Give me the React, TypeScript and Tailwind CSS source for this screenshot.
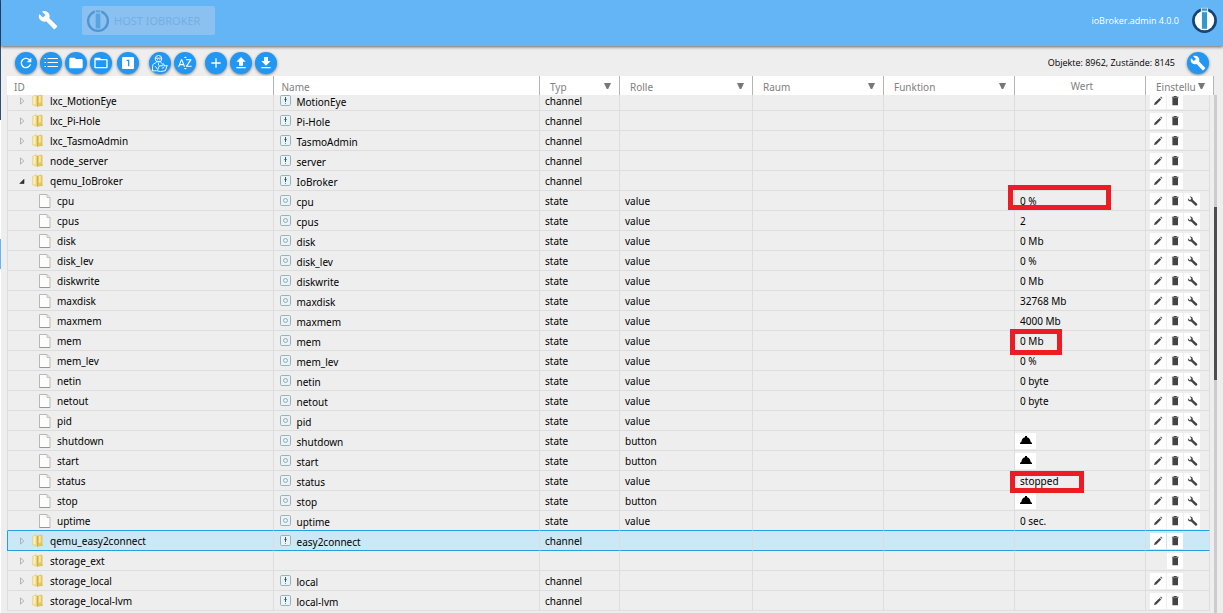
import type { ReactNode } from "react";
import {
  MdAdd, MdBuild, MdFileDownload, MdFileUpload, MdFolder, MdFolderOpen,
  MdLooksOne, MdRefresh, MdSortByAlpha,
} from "react-icons/md";

type Kind = "folder" | "open" | "file";
type Row = {
  kind: Kind;
  id: string;
  name?: string;
  type?: string;
  role?: string;
  value?: string;
  mark?: string;
  selected?: boolean;
};

const channel = (id: string, name: string, extra: Partial<Row> = {}): Row => ({ kind: "folder", id, name, type: "channel", ...extra });
const state = (id: string, value: string, mark?: string): Row => ({ kind: "file", id, name: id, type: "state", role: "value", value, mark });
const action = (id: string): Row => ({ kind: "file", id, name: id, type: "state", role: "button" });

const rows: Row[] = [
  channel("lxc_MotionEye", "MotionEye"),
  channel("lxc_Pi-Hole", "Pi-Hole"),
  channel("lxc_TasmoAdmin", "TasmoAdmin"),
  channel("node_server", "server"),
  channel("qemu_IoBroker", "IoBroker", { kind: "open" }),
  state("cpu", "0 %", "-left-[7px] -top-[6px] h-[25px] w-[103px]"),
  state("cpus", "2"),
  state("disk", "0 Mb"),
  state("disk_lev", "0 %"),
  state("diskwrite", "0 Mb"),
  state("maxdisk", "32768 Mb"),
  state("maxmem", "4000 Mb"),
  state("mem", "0 Mb", "-left-[5px] -top-[2px] h-[26px] w-[52px]"),
  state("mem_lev", "0 %"),
  state("netin", "0 byte"),
  state("netout", "0 byte"),
  state("pid", ""),
  action("shutdown"),
  action("start"),
  state("status", "stopped", "-left-[5px] top-0 h-[22px] w-[74px]"),
  action("stop"),
  state("uptime", "0 sec."),
  channel("qemu_easy2connect", "easy2connect", { selected: true }),
  { kind: "folder", id: "storage_ext" },
  channel("storage_local", "local"),
  channel("storage_local-lvm", "local-lvm"),
];

function Logo({ ring, bar, fill, gap, className }: { ring: string; bar: string; fill: string; gap: string; className: string }) {
  return (
    <svg viewBox="0 0 26 26" className={className} aria-hidden="true">
      <circle cx="13" cy="13" r="10.7" fill={fill} stroke={ring} strokeWidth="2.6" />
      <rect x="9.5" y=".8" width="7" height="4" fill={gap} />
      <rect x="10.5" y="1.4" width="5" height="2.2" fill={bar} />
      <rect x="10.5" y="5" width="5" height="16" fill={bar} />
    </svg>
  );
}

function Round({ label, className = "", children }: { label: string; className?: string; children: ReactNode }) {
  return (
    <button
      type="button"
      aria-label={label}
      className={`flex size-[22px] shrink-0 items-center justify-center rounded-full bg-[#2196f3] text-white shadow-[0_1px_3px_rgba(0,0,0,0.45)] ${className}`}
    >
      {children}
    </button>
  );
}

function ListIcon() {
  return (
    <svg viewBox="0 0 14 11" className="mb-px h-[11px] w-[14px]" stroke="white" aria-hidden="true">
      <path d="M3.5 1.5H14M3.5 5.5H14M3.5 9.5H14M.5 1.5H2M.5 5.5H2M.5 9.5H2" />
    </svg>
  );
}

function Expert() {
  return (
    <svg viewBox="0 0 18 18" className="size-[18px]" fill="none" stroke="white" strokeWidth=".9" aria-hidden="true">
      <circle cx="7.5" cy="4.8" r="3.3" />
      <path d="M4 4.2h7M6 5.4h.8M8.5 5.4h.8M6.3 7c.8.5 1.6.5 2.4 0M5.5 8.5l-2.8 1.3C1.6 10.5 1.4 13 1.5 16.8h4.2M9.5 8.5l2 1M4.2 12.2l2 2.7M6.2 16.8l2.2-5h3l.8-2 1 .8-.3 1.5 3.3-.6-1.8 5.2-5 .9z" />
      <path d="M7.5 9.2v2.2M11 14.2l2-.7" />
    </svg>
  );
}

function Folder() {
  return (
    <svg viewBox="0 0 11 13" className="h-[13px] w-[11px] shrink-0" aria-hidden="true">
      <path d="M.3 2.2L4 .3l1.6 1.2v11.2L.3 11z" fill="#e9d37a" />
      <path d="M1.2 2.8L3.6 1.6v9.2L1.2 10.3z" fill="#faf0bf" />
      <path d="M5.6 1.8L9.3.5l1.2 1v10.3l-4.900 1z" fill="#e3c65c" />
      <path d="M6.9 2.3l1.8-.6v6.5l-1.8.8z" fill="#f8eaad" />
      <path d="M5.5 2v10.7" stroke="#c4a445" strokeWidth=".8" />
      <path d="M9.3 11l1.2-.3v1l-1.2.3z" fill="#a9bf72" />
    </svg>
  );
}

function FileIcon() {
  return (
    <svg viewBox="0 0 12 14" className="h-[14px] w-[12px] shrink-0" aria-hidden="true">
      <path d="M.5.5H8l3 3v10H.5z" fill="#fcfcfa" stroke="#b9b9b3" />
      <path d="M8 .5v3h3" fill="#e4e4dd" stroke="#c4c4be" />
      <path d="M.5 13.5H11" stroke="#96968f" />
    </svg>
  );
}

function KindIcon({ type }: { type: string }) {
  return (
    <svg viewBox="0 0 11 11" className="size-[11px] shrink-0" fill="none" aria-hidden="true">
      <rect x=".5" y=".5" width="10" height="10" rx="1.2" stroke="#93b3bd" fill="#edf3f4" />
      {type === "state" ? (
        <circle cx="5.5" cy="5.5" r="2" stroke="#8fabb5" />
      ) : (
        <>
          <path d="M4 4.5h3M5.5 8v1" stroke="#7798a3" />
          <path d="M5.5 2v5" stroke="#2f5c6b" />
        </>
      )}
    </svg>
  );
}

function Expander({ open }: { open: boolean }) {
  return (
    <svg viewBox="0 0 6 8" className="h-[8px] w-[6px] shrink-0" aria-hidden="true">
      {open ? <path d="M5 2.3v4.200H.8z" fill="#333" stroke="#222" strokeWidth=".6" /> : <path d="M1.5.9v6.200L4.800 4z" fill="none" stroke="#aaa" strokeWidth=".9" />}
    </svg>
  );
}

const toolPaths = {
  edit: "M4 12l.7-2.300L9.600 4.900l1.600 1.600-4.900 4.900zM10.200 4.300l.7-.7 1.500 1.500-.7.7z",
  delete: "M5.400 4.900h5.600v7.400H5.400zM4.900 3.800h1.800V3h3v.8h1.800v.9H4.900z",
  configure: "M3.900 5.300c-.3 2.300 1.400 3.700 3.200 3.200l4.200 4.100c1.100.8 2.600-.7 1.800-1.800L8.800 6.700c.4-2-1.100-3.500-3.200-3.200l1.800 1.800-.6 1.300-1.300.4z",
};

function Tool({ kind, label }: { kind: keyof typeof toolPaths; label: string }) {
  return (
    <button type="button" aria-label={label} className="size-4 bg-white">
      <svg viewBox="0 0 16 16" className="size-4 fill-[#444]" aria-hidden="true">
        <path d={toolPaths[kind]} />
      </svg>
    </button>
  );
}

function Columns({ last }: { last: string }) {
  return (
    <colgroup>
      <col />
      <col />
      <col className="w-20" />
      <col className="w-[133px]" />
      <col className="w-[131px]" />
      <col className="w-[131px]" />
      <col className="w-[131px]" />
      <col className={last} />
    </colgroup>
  );
}

function Filter({ label, tight = false }: { label: string; tight?: boolean }) {
  return (
    <th className="border-r border-[#b5b5b5] p-0 font-normal">
      <button type="button" className={`flex w-full items-center justify-between pl-2.5 ${tight ? "pr-2" : "pr-2"}`}>
        <span className="pt-[2px]">{label}</span>
        <svg viewBox="0 0 7 6" className="h-[6px] w-[7px] fill-[#777]" aria-hidden="true">
          <path d="M0 0h7L4.200 6H2.800z" />
        </svg>
      </button>
    </th>
  );
}

function TreeRow({ row, beforeSelected }: { row: Row; beforeSelected: boolean }) {
  const line = row.selected || beforeSelected ? "border-b-[#26a0da]" : "border-b-[#ddd]";
  const cell = `h-5 border-b border-r border-r-[#ddd] p-0 ${line}`;
  return (
    <tr className={row.selected ? "bg-[#cbe8f6]" : ""}>
      <td className={`${cell} border-l ${row.selected ? "border-l-[#26a0da]" : "border-l-[#ddd]"}`}>
        {row.kind === "file" ? (
          <div className="flex h-[19px] items-center gap-[6px] pl-[31px]">
            <FileIcon />
            {row.id}
          </div>
        ) : (
          <div className="flex h-[19px] items-center pl-[11px]">
            <Expander open={row.kind === "open"} />
            <span className="mr-[7px] ml-[7px]"><Folder /></span>
            {row.id}
          </div>
        )}
      </td>
      <td className={cell}>
        {row.name && (
          <div className="flex h-[19px] items-center gap-[6px] pl-[6px]">
            <KindIcon type={row.type ?? ""} />
            <span className="pt-[2px]">{row.name}</span>
          </div>
        )}
      </td>
      <td className={`${cell} pl-[5px]`}>{row.type}</td>
      <td className={`${cell} pl-[5px]`}>{row.role}</td>
      <td className={cell} />
      <td className={cell} />
      <td className={cell}>
        <div className="relative flex h-[19px] items-center">
          {row.role === "button" ? (
            <button type="button" aria-label={`Trigger ${row.id}`} className="flex h-4 w-[21px] items-center justify-center bg-white">
              <svg viewBox="0 0 12 9" className="h-[9px] w-[12px] fill-black" aria-hidden="true">
                <path d="M5 0h2v1.200C9 1.600 10.300 3.300 10.500 5.500L12 7v1H0V7l1.500-1.500C1.700 3.300 3 1.600 5 1.200z" />
              </svg>
            </button>
          ) : (
            <span className="pl-[5px]">{row.value}</span>
          )}
          {row.mark && <span className={`pointer-events-none absolute z-10 border-[5px] border-[#ed1c24] ${row.mark}`} />}
        </div>
      </td>
      <td className={`${cell} ${row.selected ? "border-r-[#26a0da]" : ""}`}>
        <div className="flex h-[19px] items-end gap-px pb-px pl-1">
          {row.name ? <Tool kind="edit" label={`Edit ${row.id}`} /> : <span className="size-4" />}
          <Tool kind="delete" label={`Delete ${row.id}`} />
          {row.kind === "file" && <Tool kind="configure" label={`Configure ${row.id}`} />}
        </div>
      </td>
    </tr>
  );
}

export default function App() {
  return (
    <div className="flex h-screen overflow-hidden bg-[#eee] font-['Noto_Sans','Open_Sans',sans-serif] text-[10px] leading-[14px] text-black">
      <div className="flex w-px shrink-0 flex-col bg-white">
        <div className="h-[120px] bg-[#2c5078]" />
        <div className="mt-[119px] h-[30px] bg-[#64b5f6]" />
      </div>
      <div className="flex min-w-0 flex-1 flex-col">
        <header className="flex h-[46px] shrink-0 items-start bg-[#64b5f6] shadow-[0_1px_3px_rgba(0,0,0,0.6)]">
          <button type="button" aria-label="Settings" className="ml-[37px] mt-[10px] text-white">
            <MdBuild className="size-[20px]" />
          </button>
          <button type="button" disabled className="ml-[24px] mt-[6px] flex h-[29px] w-[133px] items-center gap-1 rounded-[2px] bg-[#8bc1f0] pl-1 text-[11px] text-[#74afe3]">
            <Logo ring="#5095d2" bar="#56a5df" fill="none" gap="#8bc1f0" className="size-[24px] shrink-0" />
            <span className="whitespace-nowrap">HOST IOBROKER</span>
          </button>
          <span className="ml-auto mt-[14px] font-['Open_Sans',sans-serif] text-[9px] text-white">ioBroker.admin 4.0.0</span>
          <Logo ring="#164477" bar="#3399cc" fill="#fff" gap="#d9edf8" className="ml-[12px] mr-[5px] mt-[7px] size-[27px]" />
        </header>

        <div className="flex h-[30px] shrink-0 items-center gap-[3px] pl-[14px] pr-[14px] pt-[4px]">
          <Round label="Refresh"><MdRefresh className="size-[16px]" /></Round>
          <Round label="List view"><ListIcon /></Round>
          <Round label="Collapse all"><MdFolder className="size-[16px]" /></Round>
          <Round label="Expand all"><MdFolderOpen className="size-[16px]" /></Round>
          <Round label="Expand one level" className="ml-[2px]"><MdLooksOne className="size-[16px]" /></Round>
          <Round label="Expert mode" className="ml-[7px]"><Expert /></Round>
          <Round label="Sort alphabetically"><MdSortByAlpha className="size-[16px]" /></Round>
          <Round label="Add object" className="ml-[6px]"><MdAdd className="size-[16px]" /></Round>
          <Round label="Upload"><MdFileUpload className="size-[16px]" /></Round>
          <Round label="Download"><MdFileDownload className="size-[16px]" /></Round>
          <span className="ml-auto mr-[9px] font-['Open_Sans',sans-serif] text-[9px]">Objekte: 8962, Zustände: 8145</span>
          <Round label="Configure columns"><MdBuild className="size-[16px]" /></Round>
        </div>

        <div className="shrink-0 pl-[6px] pr-[9px]">
          <table className="w-full table-fixed border-separate border-spacing-0 bg-white text-left text-[#808080]">
            <Columns last="w-[68px]" />
            <thead>
              <tr className="h-[19px]">
                <th className="border-r border-[#b5b5b5] pt-[2px] pb-0 pl-[7px] font-normal">ID</th>
                <th className="border-r border-[#b5b5b5] pt-[2px] pb-0 pl-[8px] font-normal">Name</th>
                <Filter label="Typ" />
                <Filter label="Rolle" />
                <Filter label="Raum" />
                <Filter label="Funktion" />
                <th className="border-r border-[#b5b5b5] py-0 pr-0 pl-1 text-center font-normal">Wert</th>
                <Filter label="Einstellu" tight />
              </tr>
            </thead>
          </table>
        </div>

        <div className="flex min-h-0 flex-1 overflow-hidden pl-[6px]">
          <div className="-mt-1 min-w-0 flex-1">
            <table className="w-full table-fixed border-separate border-spacing-0">
              <Columns last="w-[64px]" />
              <tbody>
                {rows.map((row, i) => (
                  <TreeRow key={row.id} row={row} beforeSelected={Boolean(rows[i + 1]?.selected)} />
                ))}
              </tbody>
            </table>
          </div>
          <div className="ml-[4px] mr-[6px] w-[3px] shrink-0 bg-[#ccc]">
            <div className="mt-[112px] h-[173px] bg-[#4d4d4d]" />
          </div>
        </div>
      </div>
    </div>
  );
}
